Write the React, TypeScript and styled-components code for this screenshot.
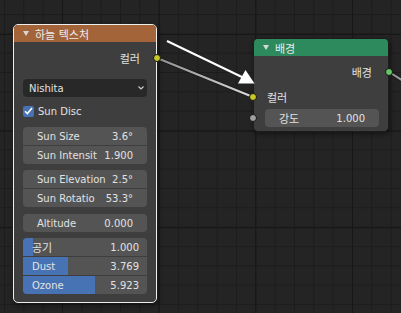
import React from "react";
import styled, { createGlobalStyle } from "styled-components";

type Field = { label: string; value: string; fill?: number };

const SOCKET = { color: "#c7c729", shader: "#63c763", value: "#a1a1a1" };

const sunSize: Field[] = [
  { label: "Sun Size", value: "3.6°" },
  { label: "Sun Intensit", value: "1.900" },
];
const sunAngle: Field[] = [
  { label: "Sun Elevation", value: "2.5°" },
  { label: "Sun Rotatio", value: "53.3°" },
];
const altitude: Field[] = [{ label: "Altitude", value: "0.000" }];
const density: Field[] = [
  { label: "공기", value: "1.000", fill: 0.083 },
  { label: "Dust", value: "3.769", fill: 0.365 },
  { label: "Ozone", value: "5.923", fill: 0.58 },
];

const GlobalStyle = createGlobalStyle`
  html, body { margin: 0; padding: 0; background: #242424; }
  body {
    font-family: "DejaVu Sans", "Noto Sans CJK KR", sans-serif;
    font-size: 10px;
    color: #e2e2e2;
  }
`;

const Editor = styled.div`
  position: relative;
  width: 401px;
  height: 313px;
  overflow: hidden;
  background-color: #242424;
  background-image:
    linear-gradient(to right, #171717 1px, transparent 1px),
    linear-gradient(to bottom, #171717 1px, transparent 1px),
    linear-gradient(to right, #1c1c1c 1px, transparent 1px),
    linear-gradient(to bottom, #1c1c1c 1px, transparent 1px);
  background-size: 96.67px 100%, 100% 96.67px, 19.333px 100%, 100% 19.333px;
  background-position: 62px 0, 0 34px, 4px 0, 0 14px;
`;

const Overlay = styled.svg<{ $front?: boolean }>`
  position: absolute;
  left: 0;
  top: 0;
  width: 401px;
  height: 313px;
  pointer-events: none;
  z-index: ${(p) => (p.$front ? 2 : 0)};
`;

const Node = styled.div<{ $x: number; $y: number; $w: number; $selected?: boolean }>`
  position: absolute;
  z-index: 1;
  left: ${(p) => p.$x}px;
  top: ${(p) => p.$y}px;
  width: ${(p) => p.$w}px;
  box-sizing: border-box;
  display: flex;
  flex-direction: column;
  background: #3e3e3e;
  border: 1px solid ${(p) => (p.$selected ? "#ededed" : "#1d1d1d")};
  border-radius: 5px;
  box-shadow: 1px 2px 5px rgba(0, 0, 0, 0.45);
`;

const Header = styled.div<{ $color: string }>`
  height: 17px;
  display: flex;
  align-items: center;
  gap: 6px;
  padding-left: 9px;
  background: ${(p) => p.$color};
  border-radius: 4px 4px 0 0;
  color: #ececec;
  font-size: 11px;
`;

const Ko = styled.span`
  font-size: 11px;
`;

const SocketRow = styled.div<{ $out?: boolean; $mt: number; $h: number; $pad: string }>`
  position: relative;
  height: ${(p) => p.$h}px;
  margin-top: ${(p) => p.$mt}px;
  padding: ${(p) => p.$pad};
  display: flex;
  align-items: center;
  justify-content: ${(p) => (p.$out ? "flex-end" : "flex-start")};
`;

const Socket = styled.span<{ $color: string; $out?: boolean }>`
  position: absolute;
  top: 50%;
  ${(p) => (p.$out ? "right: -5px;" : "left: -5px;")}
  width: 8px;
  height: 8px;
  margin-top: -4px;
  box-sizing: border-box;
  border-radius: 50%;
  background: ${(p) => p.$color};
  border: 1px solid #141414;
`;

const Select = styled.div`
  height: 18px;
  margin: 11px 9px 0;
  padding: 0 3px 0 6px;
  display: flex;
  align-items: center;
  justify-content: space-between;
  background: #282828;
  border-radius: 4px;
`;

const CheckRow = styled.div`
  height: 18px;
  margin: 5px 9px 0;
  display: flex;
  align-items: center;
  gap: 4px;
`;

const CheckBox = styled.span`
  width: 11px;
  height: 11px;
  display: flex;
  align-items: center;
  justify-content: center;
  background: #4772b3;
  border-radius: 2px;
`;

const Group = styled.div<{ $mt: number }>`
  margin: ${(p) => p.$mt}px 9px 0;
  display: flex;
  flex-direction: column;
  gap: 1px;
  border-radius: 4px;
  overflow: hidden;
`;

const NumField = styled.div<{ $slider?: boolean }>`
  position: relative;
  flex: 1;
  height: 18px;
  display: flex;
  align-items: center;
  justify-content: space-between;
  padding: ${(p) => (p.$slider ? "0 8px 0 9px" : "0 14px")};
  background: #545454;
  border-radius: 4px;
  overflow: hidden;
`;

const GroupField = styled(NumField)`
  flex: none;
  border-radius: 0;
`;

const Fill = styled.span`
  position: absolute;
  left: 0;
  top: 0;
  bottom: 0;
  background: #4772b3;
`;

const Text = styled.span`
  position: relative;
  white-space: nowrap;
`;

const Body = styled.div<{ $pb: number }>`
  display: flex;
  flex-direction: column;
  padding-bottom: ${(p) => p.$pb}px;
`;

const Triangle = () => (
  <svg width="6" height="5" viewBox="0 0 6 5">
    <path d="M0 0 H6 L3 5 Z" fill="#d8d8d8" />
  </svg>
);

const isKorean = (s: string) => /[\uac00-\ud7a3]/.test(s);

const Label = ({ children }: { children: string }) =>
  isKorean(children) ? <Ko>{children}</Ko> : <>{children}</>;

const Fields = ({ items, mt }: { items: Field[]; mt: number }) => (
  <Group $mt={mt}>
    {items.map((f) => (
      <GroupField key={f.label} $slider={f.fill !== undefined}>
        {f.fill !== undefined && <Fill style={{ width: `${f.fill * 100}%` }} />}
        <Text>
          <Label>{f.label}</Label>
        </Text>
        <Text>{f.value}</Text>
      </GroupField>
    ))}
  </Group>
);

const SkyTexture = () => (
  <Node $x={13} $y={24} $w={144} $selected>
    <Header $color="#a4643a">
      <Triangle />
      <span>하늘 텍스처</span>
    </Header>
    <Body $pb={8}>
      <SocketRow $out $mt={6} $h={20} $pad="0 16px 0 0">
        <Ko>컬러</Ko>
        <Socket $out $color={SOCKET.color} />
      </SocketRow>
      <Select>
        <span>Nishita</span>
        <svg width="6" height="4" viewBox="0 0 6 4">
          <path d="M0.5 0.5 L3 3 L5.5 0.5" fill="none" stroke="#d0d0d0" strokeWidth="1.1" />
        </svg>
      </Select>
      <CheckRow>
        <CheckBox>
          <svg width="9" height="8" viewBox="0 0 9 8">
            <path d="M1 4.2 L3.4 6.6 L8 1" fill="none" stroke="#fff" strokeWidth="1.6" />
          </svg>
        </CheckBox>
        <span>Sun Disc</span>
      </CheckRow>
      <Fields items={sunSize} mt={7} />
      <Fields items={sunAngle} mt={6} />
      <Fields items={altitude} mt={7} />
      <Fields items={density} mt={6} />
    </Body>
  </Node>
);

const Background = () => (
  <Node $x={253} $y={38} $w={136}>
    <Header $color="#2c8a5c">
      <Triangle />
      <span>배경</span>
    </Header>
    <Body $pb={4}>
      <SocketRow $out $mt={6} $h={20} $pad="0 16px 0 0">
        <Ko>배경</Ko>
        <Socket $out $color={SOCKET.shader} />
      </SocketRow>
      <SocketRow $mt={5} $h={20} $pad="0 0 0 13px">
        <Ko>컬러</Ko>
        <Socket $color={SOCKET.color} />
      </SocketRow>
      <SocketRow $mt={2} $h={18} $pad="0 9px 0 11px">
        <Socket $color={SOCKET.value} />
        <NumField>
          <Text>
            <Ko>강도</Ko>
          </Text>
          <Text>1.000</Text>
        </NumField>
      </SocketRow>
    </Body>
  </Node>
);

export default function App() {
  return (
    <>
      <GlobalStyle />
      <Editor>
        <Overlay viewBox="0 0 401 313">
          <defs>
            <linearGradient id="link" gradientUnits="userSpaceOnUse" x1="157" y1="58" x2="253" y2="97">
              <stop offset="0" stopColor="#8e8e8e" />
              <stop offset="1" stopColor="#dcdcdc" />
            </linearGradient>
          </defs>
          <line x1="157" y1="58" x2="253" y2="97" stroke="#151515" strokeWidth="4" strokeOpacity="0.7" />
          <line x1="157" y1="58" x2="253" y2="97" stroke="url(#link)" strokeWidth="2" />
          <line x1="389" y1="72" x2="405" y2="82" stroke="#151515" strokeWidth="4" strokeOpacity="0.7" />
          <line x1="389" y1="72" x2="405" y2="82" stroke="#9a9a9a" strokeWidth="2" />
        </Overlay>
        <SkyTexture />
        <Background />
        <Overlay $front viewBox="0 0 401 313">
          <line x1="167" y1="41" x2="244" y2="78" stroke="#fff" strokeWidth="2" />
          <path d="M254.5 83.5 L238 83.5 L245.5 70 Z" fill="#fff" />
        </Overlay>
      </Editor>
    </>
  );
}
